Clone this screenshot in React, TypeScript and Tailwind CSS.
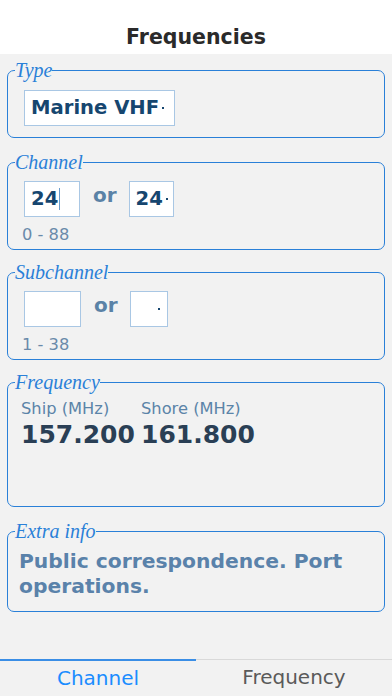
import React from 'react';

const legendCls = "ml-[1px] px-0 text-[20px] leading-[24px] text-[#2a80d8] font-['Comic_Sans_MS','Segoe_Print',cursive] italic font-light";
const boxCls = "mx-[7px] rounded-[7px] border-[1.5px] border-[#2a80d8] px-[6px]";

function Dot() {
  return <span className="ml-[3px] inline-block h-[2px] w-[2px] bg-[#16466f]" />;
}

function Group({ title, children, className = '' }: { title: string; children: React.ReactNode; className?: string }) {
  return (
    <fieldset className={`${boxCls} ${className}`}>
      <legend className={legendCls}>{title}</legend>
      <div className="pl-[10px]">{children}</div>
    </fieldset>
  );
}

export default function App() {
  return (
    <div className="flex h-[696px] w-[392px] flex-col bg-[#f2f2f2] font-['DejaVu_Sans',sans-serif]">
      <header className="flex h-[54px] items-end justify-center bg-white pb-[1px]">
        <h1 className="text-[20.5px] font-bold text-[#2a2a2a]">Frequencies</h1>
      </header>

      <main className="flex flex-1 flex-col pt-[4px]">
        <Group title="Type" className="pt-[8px] pb-[11px]">
          <div className="flex h-[36px] w-[151px] items-center border border-[#a9c7e4] bg-white pl-[6px] text-[19.6px] font-bold text-[#16466f]">
            Marine VHF<Dot />
          </div>
        </Group>

        <Group title="Channel" className="mt-[12px] pt-[7px] pb-[4px]">
          <div className="flex items-start">
            <div className="flex h-[36px] w-[56px] items-center border border-[#a9c7e4] bg-white pl-[6px] text-[19.6px] font-bold text-[#16466f]">
              24<span className="ml-[1px] h-[22px] w-px bg-[#6a9ccc]" />
            </div>
            <span className="ml-[13px] mt-[-1px] text-[20px] font-bold text-[#5a82a6]">or</span>
            <div className="ml-[12px] flex h-[36px] w-[45px] items-center border border-[#a9c7e4] bg-white pl-[6px] text-[19.6px] font-bold text-[#16466f]">
              24<Dot />
            </div>
          </div>
          <div className="mt-[8px] -ml-[2px] text-[16.3px] leading-[20px] text-[#6a8aaa]">0 - 88</div>
        </Group>

        <Group title="Subchannel" className="mt-[10px] pt-[7px] pb-[4px]">
          <div className="flex items-start">
            <div className="h-[36px] w-[57px] border border-[#a9c7e4] bg-white" />
            <span className="ml-[13px] mt-[-1px] text-[20px] font-bold text-[#5a82a6]">or</span>
            <div className="ml-[12px] flex h-[36px] w-[38px] items-center justify-end border border-[#a9c7e4] bg-white pr-[7px]">
              <Dot />
            </div>
          </div>
          <div className="mt-[8px] -ml-[2px] text-[16.3px] leading-[20px] text-[#6a8aaa]">1 - 38</div>
        </Group>

        <Group title="Frequency" className="mt-[10px] h-[137px] pt-[4px]">
          <div className="flex">
            <div className="-ml-[3px] w-[120px]">
              <div className="text-[16.3px] leading-[22px] text-[#5b84a8]">Ship (MHz)</div>
              <div className="text-[25px] font-bold leading-[30px] text-[#2a3f55]">157.200</div>
            </div>
            <div>
              <div className="text-[16.3px] leading-[22px] text-[#5b84a8]">Shore (MHz)</div>
              <div className="text-[25px] font-bold leading-[30px] text-[#2a3f55]">161.800</div>
            </div>
          </div>
        </Group>

        <Group title="Extra info" className="mt-[12px] pt-[6px] pb-[12px]">
          <p className="-ml-[5px] pr-[20px] text-[20.3px] font-bold leading-[25px] text-[#5a82aa]">
            Public correspondence. Port operations.
          </p>
        </Group>
      </main>

      <nav className="flex h-[37px] border-t border-[#d9d9d9]">
        <div className="-mt-px flex flex-1 items-center justify-center border-t-2 border-[#3a8ee6] pb-[2px] text-[20px] text-[#1a8cff]">Channel</div>
        <div className="flex flex-1 items-center justify-center pb-[2px] text-[20px] text-[#5a5a5a]">Frequency</div>
      </nav>
    </div>
  );
}
